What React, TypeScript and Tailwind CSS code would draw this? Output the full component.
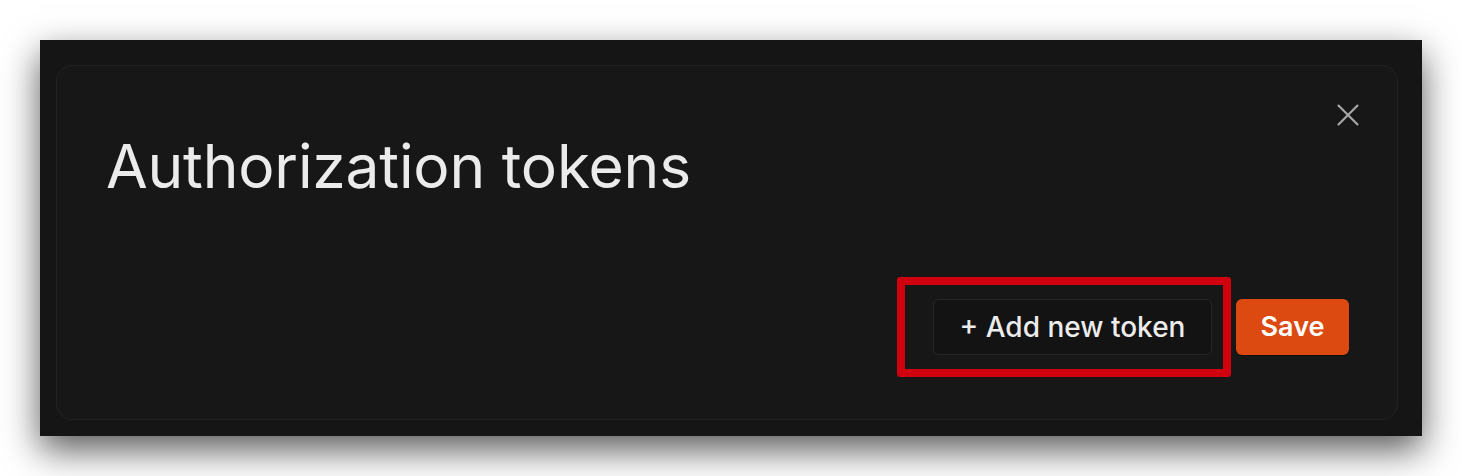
import { X } from "lucide-react";

export default function App() {
  return (
    <div className="min-h-[476px] w-full bg-white p-10 font-['Inter',sans-serif]">
      <div className="h-[396px] w-[1382px] bg-[#151515] pl-4 pr-6 pt-[25px] pb-4 shadow-[0_14px_34px_rgba(0,0,0,0.65)]">
        <div className="relative flex h-[355px] flex-col rounded-2xl border border-[#222222] bg-[#171717] pl-[49px] pr-[48px] pt-[62px] pb-[64px]">
          <button className="absolute right-[30px] top-[30px] text-[#a8a8a8]">
            <X size={38} strokeWidth={1.3} />
          </button>

          <h1 className="text-[60.5px] font-normal leading-[76px] tracking-[-0.2px] text-[#ebebeb]">
            Authorization tokens
          </h1>

          <div className="mt-auto flex items-center justify-end gap-6">
            <div className="relative">
              <span className="pointer-events-none absolute -left-[36px] -right-[19px] -top-[22px] -bottom-[22px] rounded-[3px] border-8 border-[#d0000f]" />
              <button className="flex h-[56px] w-[279px] items-center justify-center rounded-md border border-[#262626] bg-[#131313] text-[28px] font-medium text-[#ececec]">
                + Add new token
              </button>
            </div>
            <button className="flex h-[56px] w-[113px] items-center justify-center rounded-md bg-[#dc4a12] text-[27px] font-semibold text-white shadow-[0_1px_1px_rgba(0,0,0,0.3)]">
              Save
            </button>
          </div>
        </div>
      </div>
    </div>
  );
}
